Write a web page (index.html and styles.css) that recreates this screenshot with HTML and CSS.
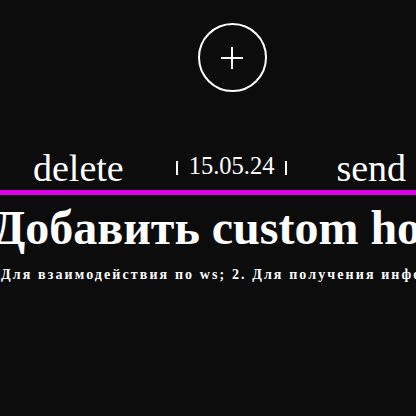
FILE: index.html
```html
<!DOCTYPE html>
<html lang="ru">
<head>
<meta charset="utf-8">
<title>Custom hook</title>
<link rel="stylesheet" href="styles.css">
</head>
<body>
<main class="page">
  <button class="add-btn" type="button" aria-label="add">
    <svg width="22" height="22" viewBox="0 0 22 22" aria-hidden="true">
      <path d="M11 0V22M0 11H22" stroke="#ffffff" stroke-width="2" fill="none"/>
    </svg>
  </button>
  <div class="toolbar">
    <span class="action">delete</span>
    <span class="date-group">
      <span class="tick"></span>
      <span class="date">15.05.24</span>
      <span class="tick"></span>
    </span>
    <span class="action send">send</span>
  </div>
  <div class="divider"></div>
  <h1 class="title">Добавить custom hook</h1>
  <p class="note">1. Для взаимодействия по ws; 2. Для получения информации</p>
</main>
</body>
</html>
```
FILE: styles.css
```css
html, body {
  margin: 0;
  padding: 0;
  background: #0c0c0c;
  overflow: hidden;
}
body {
  width: 416px;
  height: 416px;
  color: #ffffff;
  font-family: "Liberation Serif", "Times New Roman", serif;
}
.page {
  width: 464px;
  display: flex;
  flex-direction: column;
  align-items: center;
  padding-top: 23px;
}
.add-btn {
  width: 69px;
  height: 69px;
  box-sizing: border-box;
  border: 2px solid #ffffff;
  border-radius: 50%;
  background: transparent;
  padding: 0;
  display: flex;
  align-items: center;
  justify-content: center;
}
.toolbar {
  align-self: stretch;
  display: flex;
  align-items: center;
  margin-top: 54px;
  padding-left: 33px;
}
.action {
  font-size: 38px;
  line-height: normal;
}
.send {
  margin-left: 49px;
}
.date-group {
  display: flex;
  align-items: flex-end;
  gap: 11px;
  margin-left: 52px;
  margin-bottom: 4px;
}
.tick {
  width: 2px;
  height: 14px;
  background: #ffffff;
  margin-bottom: 5px;
}
.date {
  font-size: 24.5px;
  line-height: normal;
}
.divider {
  align-self: stretch;
  height: 5px;
  background: #dc00e6;
}
.title {
  margin: 5px 0 0;
  font-size: 48px;
  font-weight: bold;
  line-height: normal;
  white-space: nowrap;
}
.note {
  margin: 12px 0 0;
  font-size: 14px;
  font-weight: bold;
  letter-spacing: 2.1px;
  line-height: normal;
  white-space: nowrap;
}
```
